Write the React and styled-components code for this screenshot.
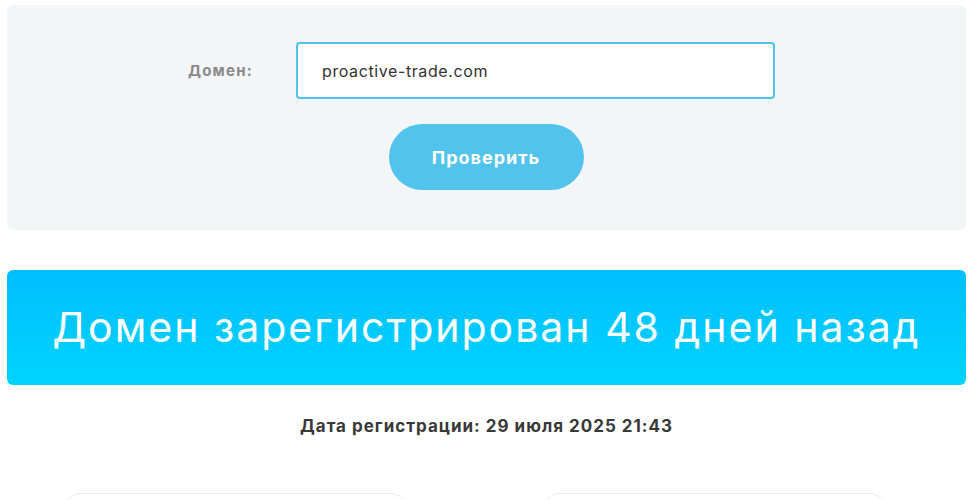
import React, { useState } from "react";
import styled, { createGlobalStyle } from "styled-components";

const GlobalStyle = createGlobalStyle`
  html, body {
    margin: 0;
    padding: 0;
    background: #fff;
    font-family: Inter, "Open Sans", "Liberation Sans", sans-serif;
  }
  * {
    box-sizing: border-box;
  }
`;

function App() {
  const [domain, setDomain] = useState("proactive-trade.com");
  return (
    <Page>
      <GlobalStyle />
      <CheckForm onSubmit={(e) => e.preventDefault()}>
        <FieldRow>
          <Label htmlFor="domain">Домен:</Label>
          <Input
            id="domain"
            autoFocus
            value={domain}
            onFocus={(e) => e.target.setSelectionRange(0, 0)}
            onChange={(e) => setDomain(e.target.value)}
          />
        </FieldRow>
        <SubmitButton type="submit">Проверить</SubmitButton>
      </CheckForm>

      <Banner>Домен зарегистрирован 48 дней назад</Banner>

      <RegDate>Дата регистрации: 29 июля 2025 21:43</RegDate>

      <Cards>
        <Card />
        <Card />
      </Cards>
    </Page>
  );
}

const Page = styled.div`
  padding: 5px 8px 0 7px;
  height: 500px;
  overflow: hidden;
`;

const CheckForm = styled.form`
  background: #f3f6f7;
  border-radius: 6px;
  height: 225px;
  padding-top: 37px;
  display: flex;
  flex-direction: column;
  align-items: center;
`;

const FieldRow = styled.div`
  display: flex;
  align-items: center;
  margin-right: 10px;
  gap: 41px;
`;

const Label = styled.label`
  font-size: 15px;
  font-weight: 700;
  letter-spacing: 1.2px;
  color: #8a8a8a;
  width: 67px;
`;

const Input = styled.input`
  width: 479px;
  height: 57px;
  border: 2px solid #4fc3ec;
  border-radius: 4px;
  padding: 0 0 0 24px;
  font-family: inherit;
  font-size: 16px;
  letter-spacing: 0.6px;
  color: #333;
  caret-color: #333;
  background: #fff;
  outline: none;
`;

const SubmitButton = styled.button`
  margin-top: 25px;
  margin-right: 1px;
  width: 195px;
  height: 66px;
  border: none;
  border-radius: 33px;
  background: #52c3ec;
  color: #fff;
  font-family: inherit;
  font-size: 18px;
  font-weight: 700;
  letter-spacing: 1px;
  cursor: pointer;
`;

const Banner = styled.div`
  margin-top: 40px;
  height: 115px;
  border-radius: 6px;
  background: linear-gradient(180deg, #00bfff 0%, #00d3ff 100%);
  color: #fff;
  font-size: 41px;
  font-weight: 400;
  letter-spacing: 2px;
  display: flex;
  align-items: center;
  justify-content: center;
  padding-bottom: 2px;
`;

const RegDate = styled.div`
  margin-top: 31px;
  text-align: center;
  font-size: 17px;
  font-weight: 700;
  letter-spacing: 1px;
  color: #383838;
`;

const Cards = styled.div`
  margin-top: 57px;
  display: grid;
  grid-template-columns: 345px 345px;
  justify-content: center;
  gap: 134px;
  margin-right: 24px;
`;

const Card = styled.div`
  height: 120px;
  border: 1px solid #ececec;
  border-radius: 18px;
  background: #fff;
`;

export default App;
